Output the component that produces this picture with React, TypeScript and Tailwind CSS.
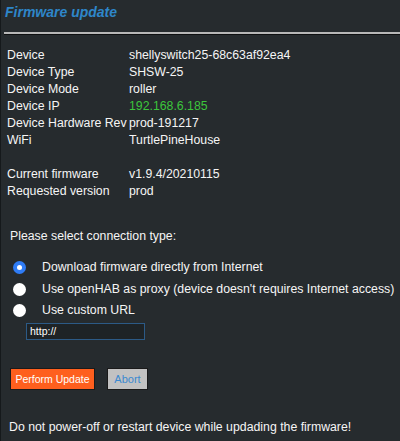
import React from "react";

const rows: [string, string, boolean?][] = [
  ["Device", "shellyswitch25-68c63af92ea4"],
  ["Device Type", "SHSW-25"],
  ["Device Mode", "roller"],
  ["Device IP", "192.168.6.185", true],
  ["Device Hardware Rev", "prod-191217"],
  ["WiFi", "TurtlePineHouse"],
];

const fw: [string, string][] = [
  ["Current firmware", "v1.9.4/20210115"],
  ["Requested version", "prod"],
];

function Radio({ checked }: { checked?: boolean }) {
  return checked ? (
    <span className="flex h-[13px] w-[13px] shrink-0 items-center justify-center rounded-full bg-[#2f7cf6]">
      <span className="h-[5px] w-[5px] rounded-full bg-white" />
    </span>
  ) : (
    <span className="h-[13px] w-[13px] shrink-0 rounded-full bg-white" />
  );
}

export default function App() {
  return (
    <div
      className="h-[441px] w-[400px] overflow-hidden whitespace-nowrap border-l border-[#15191b] bg-[#262b2e] text-[12.3px] leading-[17px] text-[#f5f5f5]"
      style={{ fontFamily: '"Liberation Sans", Arial, sans-serif' }}
    >
      <h1 className="pl-[4px] pt-[3px] text-[14px] font-bold italic leading-[19px] text-[#2e86c9]">
        Firmware update
      </h1>
      <div className="ml-[3px] mt-[10px] h-[3px] border-t-2 border-b border-t-[#b8b8b8] border-b-[#0e1011]" />

      <table className="ml-[6px] mt-[12px] border-collapse">
        <tbody>
          {rows.map(([k, v, green]) => (
            <tr key={k}>
              <td className="w-[122px] p-0">{k}</td>
              <td className={`p-0 ${green ? "text-[#3cc63c]" : ""}`}>{v}</td>
            </tr>
          ))}
          <tr>
            <td className="h-[17px] p-0" colSpan={2} />
          </tr>
          {fw.map(([k, v]) => (
            <tr key={k}>
              <td className="p-0">{k}</td>
              <td className="p-0">{v}</td>
            </tr>
          ))}
        </tbody>
      </table>

      <p className="ml-[9px] mt-[28px]">Please select connection type:</p>

      <div className="ml-[12px] mt-[14px] flex flex-col gap-[4.5px]">
        <label className="flex items-center">
          <Radio checked />
          <span className="ml-[16px]">Download firmware directly from Internet</span>
        </label>
        <label className="flex items-center">
          <Radio />
          <span className="ml-[16px]">
            Use openHAB as proxy (device doesn't requires Internet access)
          </span>
        </label>
        <label className="flex items-center">
          <Radio />
          <span className="ml-[16px]">Use custom URL</span>
        </label>
      </div>

      <div className="ml-[25px] mt-[4px] flex h-[17px] w-[119px] items-center border border-[#2c5a86] bg-[#1e2326] px-[3px] text-[10.5px] text-white">
        http://
      </div>

      <div className="ml-[9px] mt-[28px] flex gap-[12px]">
        <button className="h-[22px] w-[85px] border border-[#1a1a1a] bg-[#fe5f1e] text-[10.5px] text-white">
          Perform Update
        </button>
        <button className="h-[22px] w-[41px] border border-[#1a1a1a] bg-[#c2c2c2] text-[11px] text-[#3a89d0]">
          Abort
        </button>
      </div>

      <p className="ml-[8px] mt-[29px]">
        Do not power-off or restart device while updading the firmware!
      </p>
    </div>
  );
}
